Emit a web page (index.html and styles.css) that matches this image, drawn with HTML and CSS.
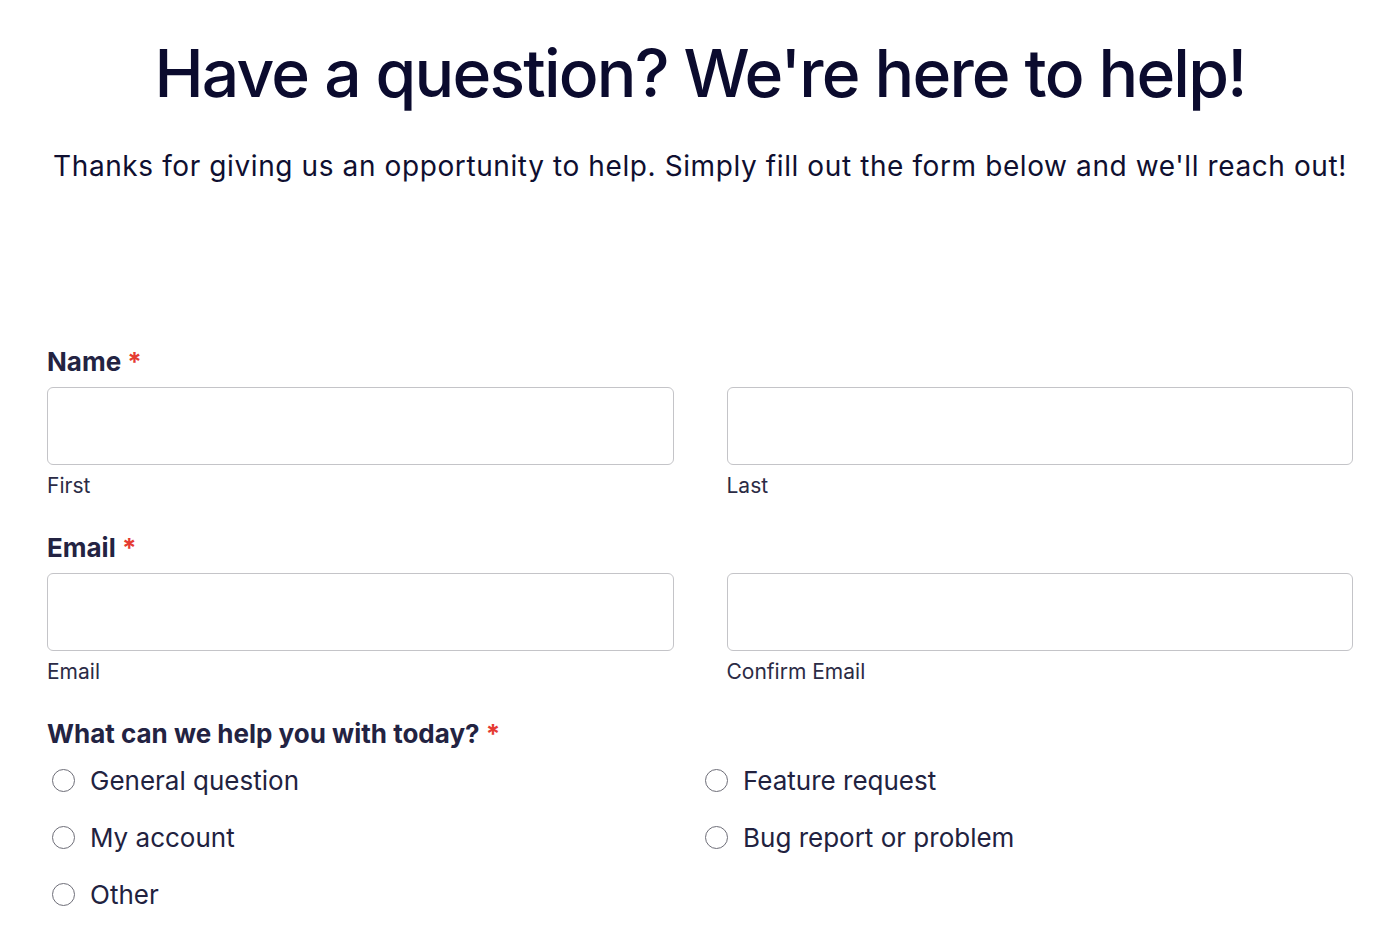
FILE: index.html
```html
<!DOCTYPE html>
<html>
<head>
<meta charset="utf-8">
<link rel="stylesheet" href="styles.css">
</head>
<body>
<div class="page">
  <h1 class="title">Have a question? We're here to help!</h1>
  <p class="intro">Thanks for giving us an opportunity to help. Simply fill out the form below and we'll reach out!</p>
  <form class="form">
    <div class="field">
      <div class="label">Name <span class="req">*</span></div>
      <div class="pair">
        <div class="sub"><input class="input" type="text"><span class="sublabel">First</span></div>
        <div class="sub"><input class="input" type="text"><span class="sublabel">Last</span></div>
      </div>
    </div>
    <div class="field">
      <div class="label">Email <span class="req">*</span></div>
      <div class="pair">
        <div class="sub"><input class="input" type="text"><span class="sublabel">Email</span></div>
        <div class="sub"><input class="input" type="text"><span class="sublabel">Confirm Email</span></div>
      </div>
    </div>
    <div class="field">
      <div class="label">What can we help you with today? <span class="req">*</span></div>
      <div class="radios">
        <label class="radio"><span class="dot"></span>General question</label>
        <label class="radio"><span class="dot"></span>Feature request</label>
        <label class="radio"><span class="dot"></span>My account</label>
        <label class="radio"><span class="dot"></span>Bug report or problem</label>
        <label class="radio"><span class="dot"></span>Other</label>
      </div>
    </div>
  </form>
</div>
</body>
</html>
```
FILE: styles.css
```css
* { box-sizing: border-box; }
body {
  margin: 0;
  background: #fff;
  font-family: Inter, "Noto Sans", sans-serif;
  color: #1f1f3d;
}
.page {
  padding: 0 47px;
}
.title {
  margin: 0;
  padding-top: 35px;
  text-align: center;
  font-size: 66px;
  font-weight: 500;
  line-height: 76px;
  color: #0b0b2e;
  letter-spacing: -1.8px;
}
.intro {
  margin: 0;
  padding-top: 37px;
  text-align: center;
  font-size: 28px;
  line-height: 36px;
  color: #0f0f30;
  letter-spacing: 0.6px;
}
.form {
  padding-top: 163px;
}
.field {
  margin-bottom: 34px;
}
.label {
  font-size: 26px;
  font-weight: 700;
  line-height: 30px;
  color: #232342;
  margin-bottom: 10px;
}
.req {
  color: #e53b32;
}
.pair {
  display: grid;
  grid-template-columns: 1fr 1fr;
  column-gap: 53px;
}
.sub {
  display: flex;
  flex-direction: column;
}
.input {
  height: 78px;
  border: 1.5px solid #c4c4c8;
  border-radius: 6px;
  background: #fff;
  margin: 0;
}
.sublabel {
  font-size: 21px;
  line-height: 26px;
  margin-top: 8px;
  color: #2b2b45;
}
.radios {
  display: grid;
  grid-template-columns: 1fr 1fr;
  row-gap: 22px;
  padding-top: 4px;
}
.radio {
  display: flex;
  align-items: center;
  padding-left: 5px;
  font-size: 26px;
  line-height: 35px;
  color: #22223f;
}
.dot {
  width: 23px;
  height: 23px;
  border: 1.5px solid #6e6e78;
  border-radius: 50%;
  margin-right: 15px;
  flex: none;
}
```
